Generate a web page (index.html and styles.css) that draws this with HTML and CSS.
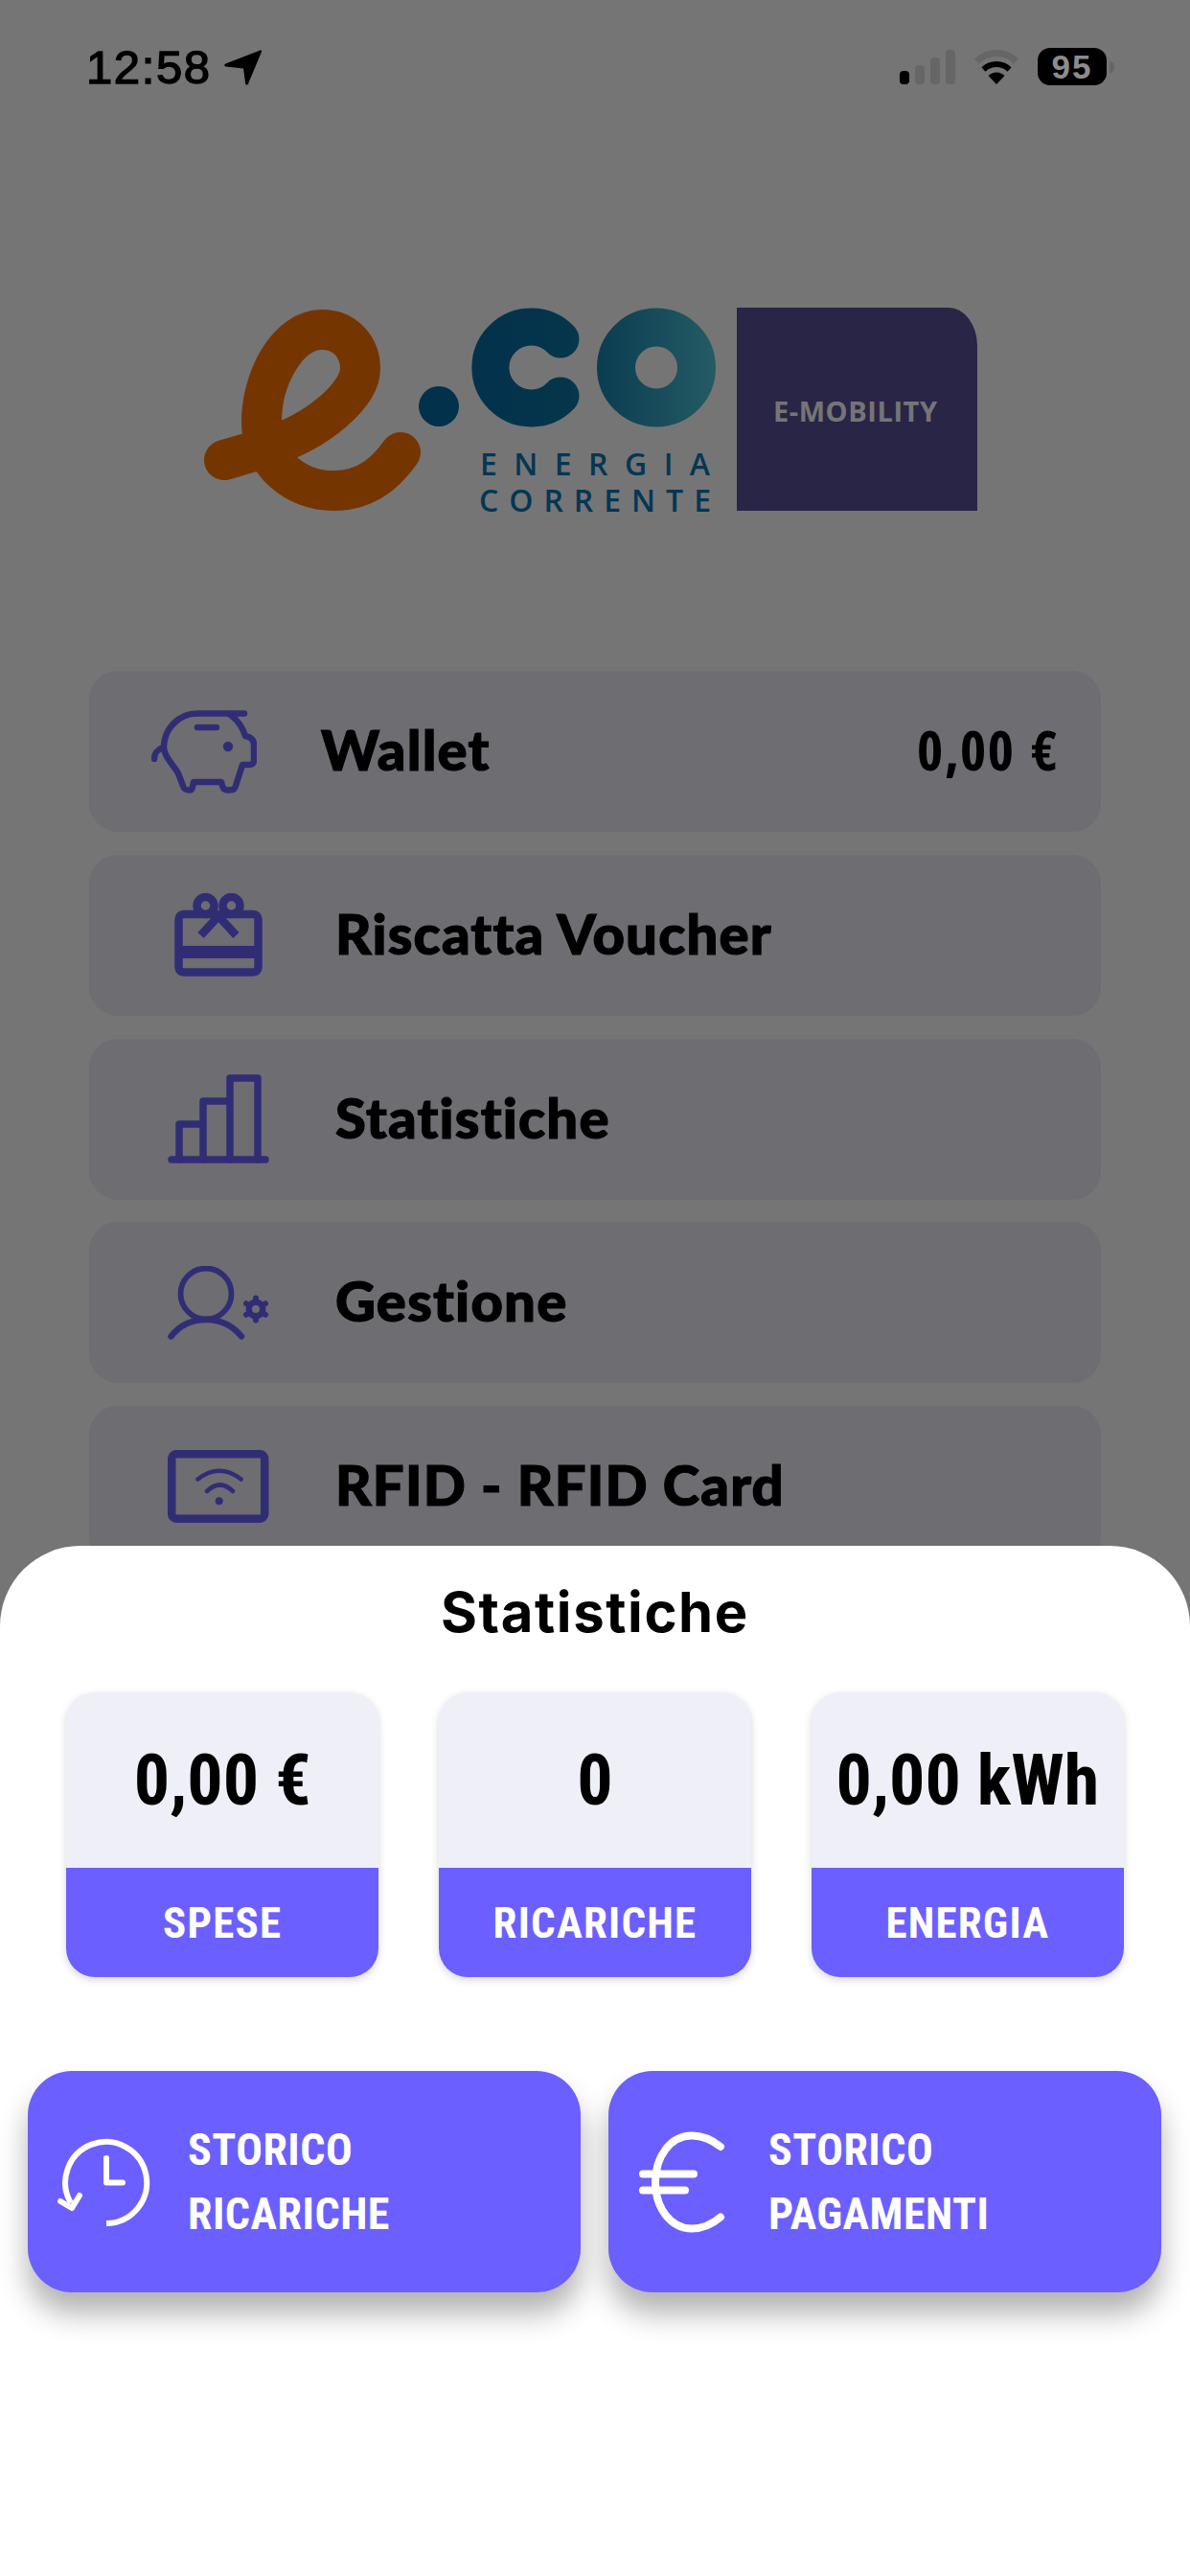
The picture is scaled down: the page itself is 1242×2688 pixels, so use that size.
FILE: index.html
```html
<!DOCTYPE html>
<html lang="it">
<head>
<meta charset="utf-8">
<title>Statistiche</title>
<link rel="stylesheet" href="styles.css">
</head>
<body>
<div class="screen">
  <header class="status">
    <div class="status-left">
      <span class="time">12:58</span>
      <svg class="arrow" viewBox="0 0 39 37"><path d="M37.5 0.5 C38.6 0 39.4 0.9 39 2 L25 35.5 C24.4 37 22.4 36.8 22.2 35.2 L20 19.5 L1.8 17.6 C0 17.4 -0.3 15.4 1.3 14.6 Z" fill="#000"/></svg>
    </div>
    <div class="status-right">
      <div class="signal">
        <span class="bar bar-1 bar-on"></span>
        <span class="bar bar-2"></span>
        <span class="bar bar-3"></span>
        <span class="bar bar-4"></span>
      </div>
      <svg class="wifi" viewBox="0 0 48 36">
        <path d="M3.500 12 A29 29 0 0 1 44.500 12" fill="none" stroke="#666" stroke-width="7"/>
        <path d="M10.500 20.500 A19.500 19.500 0 0 1 37.500 20.500" fill="none" stroke="#000" stroke-width="6"/>
        <path d="M24 36 L15.500 27 A12 12 0 0 1 32.500 27 Z" fill="#000"/>
      </svg>
      <div class="battery"><span class="battery-level">95</span></div>
      <span class="battery-nub"></span>
    </div>
  </header>

  <div class="logo-wrap">
    <svg class="logo" viewBox="205 320 817 226">
      <defs>
        <linearGradient id="logoBlue" gradientUnits="userSpaceOnUse" x1="437" y1="0" x2="747" y2="0">
          <stop offset="0" stop-color="#046aa6"/>
          <stop offset="0.5" stop-color="#0a74a4"/>
          <stop offset="1" stop-color="#50c6dc"/>
        </linearGradient>
      </defs>
      <path d="M234 480 L275 468 C335 450 376 410 376 385 C376 362 360 344 336 344 C300 344 273 395 273 440 C273 485 310 512 348 512 C385 512 405 490 418 472" fill="none" stroke="#ff7400" stroke-width="42" stroke-linecap="round" stroke-linejoin="round"/>
      <circle cx="458" cy="424" r="21" fill="url(#logoBlue)"/>
      <path d="M585 354 A42.500 42.500 0 1 0 585 413" fill="none" stroke="url(#logoBlue)" stroke-width="39" stroke-linecap="round"/>
      <circle cx="685" cy="383.500" r="42" fill="none" stroke="url(#logoBlue)" stroke-width="40"/>
      <text class="logo-line" x="501" y="496" textLength="240">ENERGIA</text>
      <text class="logo-line" x="500" y="534" textLength="242">CORRENTE</text>
      <path d="M769 321 H990 A30 40 0 0 1 1020 361 V533 H769 Z" fill="#5b529b"/>
      <text class="logo-tag" x="807" y="440" textLength="171">E-MOBILITY</text>
    </svg>
  </div>

  <nav class="menu">
    <div class="row row-wallet">
      <svg class="icon icon-pig" viewBox="0 0 110 87">
        <g fill="none" stroke="#6c63ff" stroke-width="6.500" stroke-linecap="round" stroke-linejoin="round">
          <path d="M97 3.500 H48 C28 3.500 13 20 13 39 C13 48 22 56 28 66 L33 79 C34 83 36 83.500 40 83.500 C43 83.500 43 80 44 75 H73 C74 80 75 83.500 80 83.500 C85 83.500 87 83 88 79 L95 57 H102 C106 57 107 55 107 52 V36 C107 30 103 28 98 27 C94 15 88 8 80 3.500"/>
          <path d="M12 39 C6 41 3 46 3 51"/>
          <path d="M48 18 H68"/>
        </g>
        <circle cx="80" cy="38" r="5.200" fill="#6c63ff"/>
      </svg>
      <span class="row-label">Wallet</span>
      <span class="row-amount">0,00 €</span>
    </div>
    <div class="row">
      <svg class="icon" viewBox="0 0 106 87">
        <g transform="translate(7.500 0)" fill="none" stroke="#6c63ff" stroke-width="8.500">
          <rect x="4" y="22" width="83" height="60.500" rx="5" stroke-linejoin="round"/>
          <rect x="4" y="55" width="83" height="13" fill="#6c63ff" stroke="none"/>
          <circle cx="32" cy="13" r="9"/>
          <circle cx="59" cy="13" r="9"/>
          <path d="M45.500 24 L27 44 M45.500 24 L64 44"/>
        </g>
      </svg>
      <span class="row-label">Riscatta Voucher</span>
    </div>
    <div class="row">
      <svg class="icon" viewBox="0 0 106 93">
        <g fill="none" stroke="#6c63ff" stroke-width="7.500" stroke-linecap="round" stroke-linejoin="round">
          <path d="M4 89 H102"/>
          <path d="M12 89 V52 H37 M37 89 V28 H65 M65 89 V4 H94 V89"/>
        </g>
      </svg>
      <span class="row-label">Statistiche</span>
    </div>
    <div class="row">
      <svg class="icon" viewBox="0 0 106 77">
        <g fill="none" stroke="#6c63ff" stroke-linecap="round">
          <circle cx="40" cy="29" r="26.500" stroke-width="5.800"/>
          <path d="M3.500 73.500 C14 60 28 56 40 56 C52 56 66 60 77 73.500" stroke-width="6.500"/>
          <circle cx="92" cy="45" r="7.250" stroke-width="6.500"/>
          <path d="M92 36 V33.500 M92 54 V56.500 M84.200 40.500 L82 39.250 M99.800 49.500 L102 50.750 M84.200 49.500 L82 50.750 M99.800 40.500 L102 39.250" stroke-width="6"/>
        </g>
      </svg>
      <span class="row-label">Gestione</span>
    </div>
    <div class="row">
      <svg class="icon" viewBox="0 0 106 76">
        <rect x="4.200" y="4.200" width="97" height="67.600" rx="5" fill="none" stroke="#6c63ff" stroke-width="8.500"/>
        <path d="M31.500 30.500 Q54 13 76.500 30.500 M41 43 Q54.500 30 68 43" fill="none" stroke="#6c63ff" stroke-width="4.600" stroke-linecap="round"/>
        <circle cx="53.700" cy="53.300" r="4" fill="#6c63ff"/>
      </svg>
      <span class="row-label">RFID - RFID Card</span>
    </div>
  </nav>

  <div class="overlay"></div>

  <section class="sheet">
    <h1 class="sheet-title">Statistiche</h1>
    <div class="cards">
      <div class="card">
        <div class="card-value">0,00 €</div>
        <div class="card-label">SPESE</div>
      </div>
      <div class="card">
        <div class="card-value">0</div>
        <div class="card-label">RICARICHE</div>
      </div>
      <div class="card">
        <div class="card-value">0,00 kWh</div>
        <div class="card-label">ENERGIA</div>
      </div>
    </div>
    <div class="actions">
      <div class="action">
        <svg class="action-icon" viewBox="0 0 120 120">
          <g fill="none" stroke="#fff" stroke-linecap="round" stroke-linejoin="round">
            <path d="M64 103 A42.500 42.500 0 1 0 27 82" stroke-width="6" stroke-linecap="butt"/>
            <path d="M16 80 L28 87 L36 74" stroke-width="6"/>
            <path d="M64 35 V60.500 H81" stroke-width="6"/>
          </g>
        </svg>
        <div class="action-text">STORICO<br>RICARICHE</div>
      </div>
      <div class="action">
        <svg class="action-icon" viewBox="0 0 120 120">
          <g fill="none" stroke="#fff" stroke-width="8" stroke-linecap="round">
            <path d="M99 23 Q85 11.500 69 11.500 C47 11.500 31 33 31 60 C31 87 47 108.500 69 108.500 Q85 108.500 99 96.500"/>
            <path d="M18 51.500 H71 M18 68.500 H62"/>
          </g>
        </svg>
        <div class="action-text">STORICO<br>PAGAMENTI</div>
      </div>
    </div>
  </section>
</div>
</body>
</html>
```
FILE: styles.css
```css
* { box-sizing: border-box; margin: 0; padding: 0; }

html, body { width: 1242px; height: 2688px; overflow: hidden; background: #fff; }

.screen {
  position: relative;
  width: 1242px;
  height: 2688px;
  overflow: hidden;
  background: #fff;
}

/* status bar */
.status {
  position: relative;
  z-index: 2;
  height: 130px;
  padding: 50px 79px 0 90px;
  display: flex;
  justify-content: space-between;
  align-items: flex-start;
}
.status-left { display: flex; align-items: center; gap: 13px; height: 40px; }
.time {
  font-family: "Liberation Sans", sans-serif;
  font-weight: 400;
  font-size: 49px;
  line-height: 40px;
  letter-spacing: 1.6px;
  color: #000;
  -webkit-text-stroke: 1.4px #000;
}
.arrow { width: 39px; height: 37px; }
.status-right { display: flex; align-items: flex-start; }
.signal { display: flex; align-items: flex-end; gap: 6px; height: 36px; margin-top: 2px; margin-right: 19px; }
.bar { width: 10px; border-radius: 4px; background: #666; }
.bar-on { background: #000; }
.bar-1 { height: 14px; }
.bar-2 { height: 20px; }
.bar-3 { height: 28px; }
.bar-4 { height: 36px; }
.wifi { width: 48px; height: 36px; margin-top: 2px; margin-right: 19px; }
.battery {
  width: 72px;
  height: 39px;
  border-radius: 13px;
  background: #000;
  display: flex;
  align-items: center;
  justify-content: center;
}
.battery-level {
  font-family: "Liberation Sans", sans-serif;
  font-weight: 700;
  font-size: 35px;
  line-height: 39px;
  letter-spacing: 2px;
  color: #8c8c8c;
}
.battery-nub {
  width: 5px;
  height: 12px;
  margin: 14px 0 0 3px;
  border-radius: 0 6px 6px 0;
  background: #666;
}

/* logo */
.logo-wrap { height: 570px; padding: 190px 0 0 205px; }
.logo { display: block; width: 817px; height: 226px; }
.logo-line {
  font-family: "Open Sans", sans-serif;
  font-weight: 600;
  font-size: 32px;
  fill: #0779b6;
}
.logo-tag {
  font-family: "Open Sans", sans-serif;
  font-weight: 700;
  font-size: 29px;
  fill: #fff;
}

/* menu */
.menu {
  padding: 0 93px;
  display: flex;
  flex-direction: column;
  gap: 23.8px;
}
.row {
  height: 168px;
  flex: none;
  padding: 0 44px 0 82px;
  display: flex;
  align-items: center;
  gap: 69px;
  border-radius: 30px;
  background: #edeef8;
}
.row-wallet { padding-left: 65px; gap: 67px; }
.icon { width: 106px; flex: none; height: auto; }
.icon-pig { width: 110px; }
.row-label {
  padding-bottom: 4px;
  font-family: Lato, sans-serif;
  font-weight: 900;
  font-size: 58px;
  line-height: 70px;
  letter-spacing: 1.2px;
  color: #000;
  white-space: nowrap;
  -webkit-text-stroke: 1.2px #000;
}
.row-amount {
  margin-left: auto;
  padding-bottom: 4px;
  font-family: "Open Sans", sans-serif;
  font-stretch: 75%;
  font-weight: 700;
  font-size: 58px;
  line-height: 70px;
  letter-spacing: 1.5px;
  word-spacing: 5px;
  color: #000;
}

/* dimming layer */
.overlay {
  position: absolute;
  inset: 0;
  z-index: 1;
  background: rgba(0, 0, 0, 0.54);
}

/* bottom sheet */
.sheet {
  position: absolute;
  z-index: 3;
  left: 0;
  right: 0;
  top: 1613px;
  bottom: 0;
  padding-top: 39px;
  border-radius: 84px 84px 0 0;
  background: #fff;
}
.sheet-title {
  font-family: Inter, sans-serif;
  font-weight: 700;
  font-size: 58px;
  line-height: 60px;
  letter-spacing: 1.6px;
  text-align: center;
  color: #000;
}
.cards {
  margin-top: 54px;
  padding: 0 69px;
  display: grid;
  grid-template-columns: repeat(3, 1fr);
  gap: 62.5px;
}
.card {
  height: 297px;
  border-radius: 30px;
  overflow: hidden;
  background: #eff0f7;
  box-shadow: 0 3px 8px rgba(0, 0, 0, 0.16);
  display: flex;
  flex-direction: column;
}
.card-value {
  height: 183px;
  display: flex;
  align-items: center;
  justify-content: center;
  font-family: Roboto, sans-serif;
  font-stretch: 75%;
  font-weight: 700;
  font-size: 74px;
  color: #000;
  white-space: nowrap;
}
.card-label {
  height: 114px;
  display: flex;
  align-items: center;
  justify-content: center;
  font-family: Roboto, sans-serif;
  font-stretch: 75%;
  font-weight: 700;
  font-size: 45px;
  letter-spacing: 1.2px;
  color: #fff;
  background: #6c5fff;
}
.actions {
  margin-top: 98px;
  padding: 0 30px 0 29px;
  display: grid;
  grid-template-columns: repeat(2, 1fr);
  gap: 29px;
}
.action {
  height: 231px;
  border-radius: 46px;
  padding-left: 18px;
  display: flex;
  align-items: center;
  gap: 29px;
  background: #6c5fff;
  box-shadow: 0 22px 30px rgba(0, 0, 0, 0.3);
}
.action-icon { width: 120px; height: 120px; flex: none; }
.action-text {
  font-family: Roboto, sans-serif;
  font-stretch: 75%;
  font-weight: 700;
  font-size: 46px;
  line-height: 66.5px;
  letter-spacing: 0.5px;
  color: #fff;
}
```
